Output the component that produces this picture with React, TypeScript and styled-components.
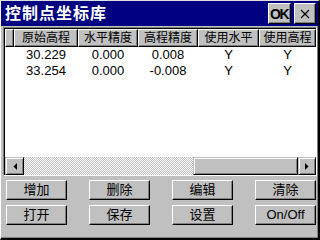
import React from "react";
import styled, { createGlobalStyle } from "styled-components";

const Global = createGlobalStyle`
  html, body { margin: 0; padding: 0; background: #c0c0c0; }
  * { box-sizing: border-box; }
`;

const CJK = `"Liberation Sans", "Noto Sans CJK SC", sans-serif`;

const Window = styled.div`
  width: 320px;
  height: 240px;
  background: #c0c0c0;
  display: flex;
  flex-direction: column;
  border-top: 1px solid #dfdfdf;
  border-left: 1px solid #ffffff;
  border-right: 2px solid #000;
  border-bottom: 2px solid #000;
  box-shadow: inset -1px -1px 0 #808080;
  overflow: hidden;
`;

const TitleBar = styled.div`
  height: 25px;
  background: #000080;
  display: flex;
  align-items: center;
  padding: 0 2px 0 4px;
  gap: 3px;
  flex-shrink: 0;
`;

const Title = styled.div`
  flex: 1;
  color: #fff;
  font-family: ${CJK};
  font-weight: bold;
  font-size: 16px;
  letter-spacing: 1px;
  line-height: 25px;
`;

const TitleButton = styled.div<{ $wide?: boolean }>`
  width: ${(p) => (p.$wide ? 23 : 22)}px;
  height: 21px;
  background: #c0c0c0;
  border: 1px solid;
  border-color: #fff #000 #000 #fff;
  box-shadow: inset -1px -1px 0 #808080;
  display: flex;
  align-items: center;
  justify-content: center;
  font-family: "Liberation Sans Narrow", "Liberation Sans", sans-serif;
  font-weight: bold;
  font-size: 14px;
  color: #000;
  letter-spacing: -1.5px;
  padding-right: 1px;
`;

const Body = styled.div`
  flex: 1;
  display: flex;
  flex-direction: column;
  padding: 1px 1px 0 2px;
`;

const ListView = styled.div`
  height: 149px;
  background: #fff;
  border: 1px solid;
  border-color: #808080 #fff #fff #808080;
  box-shadow: inset 1px 1px 0 #000;
  padding: 1px 0 0 1px;
  display: flex;
  flex-direction: column;
`;

const Grid = styled.div`
  display: grid;
  grid-template-columns: 9px 64px 60px 60px 61px 57px;
`;

const HeaderCell = styled.div`
  height: 18px;
  background: #c0c0c0;
  border: 1px solid;
  border-color: #fff #000 #000 #fff;
  box-shadow: inset -1px -1px 0 #808080;
  font-family: ${CJK};
  font-size: 12px;
  line-height: 16px;
  text-align: center;
  color: #000;
  white-space: nowrap;
  overflow: hidden;
`;

const Cell = styled.div`
  height: 16px;
  font-family: ${CJK};
  font-size: 13px;
  line-height: 16px;
  text-align: center;
  color: #000;
  white-space: nowrap;
`;

const Spacer = styled.div`
  flex: 1;
`;

const ScrollBar = styled.div`
  height: 18px;
  display: flex;
  background-color: #fff;
  background-image: repeating-conic-gradient(#c0c0c0 0 25%, #fff 0 50%);
  background-size: 2px 2px;
`;

const ScrollButton = styled.div<{ $w: number }>`
  width: ${(p) => p.$w}px;
  height: 18px;
  background: #c0c0c0;
  border: 1px solid;
  border-color: #c0c0c0 #000 #000 #c0c0c0;
  box-shadow: inset 1px 1px 0 #fff, inset -1px -1px 0 #808080;
  display: flex;
  align-items: center;
  justify-content: center;
  flex-shrink: 0;
`;

const Track = styled.div<{ $w: number }>`
  width: ${(p) => p.$w}px;
  flex-shrink: 0;
`;

const Buttons = styled.div`
  display: grid;
  grid-template-columns: repeat(4, 61px);
  justify-content: space-between;
  row-gap: 5px;
  padding: 4px 1px 0 3px;
`;

const Btn = styled.div`
  height: 20px;
  background: #c0c0c0;
  border: 1px solid;
  border-color: #fff #000 #000 #fff;
  box-shadow: inset -1px -1px 0 #808080;
  font-family: ${CJK};
  font-size: 13px;
  line-height: 18px;
  text-align: center;
  color: #000;
`;

const headers = ["", "原始高程", "水平精度", "高程精度", "使用水平", "使用高程"];
const rows = [
  ["", "30.229", "0.000", "0.008", "Y", "Y"],
  ["", "33.254", "0.000", "-0.008", "Y", "Y"],
];
const buttons = ["增加", "删除", "编辑", "清除", "打开", "保存", "设置", "On/Off"];

const Arrow = ({ dir }: { dir: "l" | "r" }) => (
  <svg width="4" height="7" viewBox="0 0 4 7">
    {dir === "l" ? <polygon points="4,0 4,7 0.5,3.5" fill="#000" /> : <polygon points="0,0 0,7 3.5,3.5" fill="#000" />}
  </svg>
);

export default function App() {
  return (
    <>
      <Global />
      <Window>
        <TitleBar>
          <Title>控制点坐标库</Title>
          <TitleButton $wide>OK</TitleButton>
          <TitleButton>
            <svg width="10" height="10" viewBox="0 0 10 10">
              <path d="M1 1 L9 9 M9 1 L1 9" stroke="#000" strokeWidth="1.2" />
            </svg>
          </TitleButton>
        </TitleBar>
        <Body>
          <ListView>
            <Grid>
              {headers.map((h, i) => (
                <HeaderCell key={i}>{h}</HeaderCell>
              ))}
              {rows.map((r, ri) =>
                r.map((c, ci) => <Cell key={`${ri}-${ci}`}>{c}</Cell>)
              )}
            </Grid>
            <Spacer />
            <ScrollBar>
              <ScrollButton $w={19}>
                <Arrow dir="l" />
              </ScrollButton>
              <Track $w={169} />
              <ScrollButton $w={105} />
              <ScrollButton $w={18}>
                <Arrow dir="r" />
              </ScrollButton>
            </ScrollBar>
          </ListView>
          <Buttons>
            {buttons.map((b) => (
              <Btn key={b}>{b}</Btn>
            ))}
          </Buttons>
        </Body>
      </Window>
    </>
  );
}
